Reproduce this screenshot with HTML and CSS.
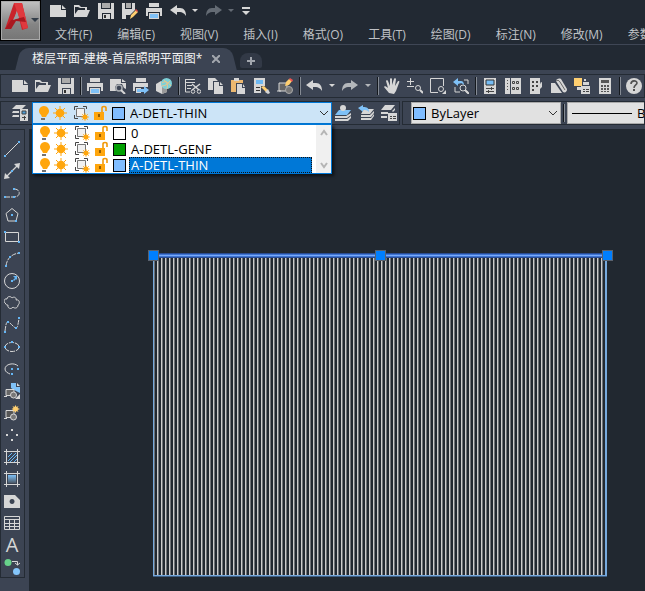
FILE: index.html
```html
<!DOCTYPE html>
<html lang="zh-CN">
<head>
<meta charset="utf-8">
<title>楼层平面-建模-首层照明平面图</title>
<link rel="stylesheet" href="styles.css">
</head>
<body>
<svg class="sprite" aria-hidden="true">
  <symbol id="new" viewBox="0 0 16 16"><path d="M0 2h11v5h5v7H0zM12 2l4 4h-4z"/></symbol>
  <symbol id="open" viewBox="0 0 16 16"><path d="M0 14V2h5l2 2h6v3h-2V5H6L4 4H1v7l3-4h12l-3 7z"/></symbol>
  <symbol id="save" viewBox="0 0 16 16"><path d="M0 0h3v6h10V0h3v16h-3v-6H4v6H0z"/><path d="M4 0h8v5H4z" fill="#aaa"/><path d="M5 11h7v5H5z"/><path d="M6 12h2v3H6z" fill="#333"/></symbol>
  <symbol id="saveas" viewBox="0 0 16 16"><path d="M0 0h3v6h7V0h3v7l-5 5H4v4H0z"/><path d="M4 0h5v5H4z" fill="#aaa"/><path d="M8 16l1-4 5-5 2 2-5 5z" fill="#ffcf70"/><path d="M13 7l1-1 2 2-1 1z" fill="#e34b4b"/></symbol>
  <symbol id="print" viewBox="0 0 16 16"><path d="M3 0h10v4H3zM0 5h16v8h-2V9H2v4H0z"/><path d="M3 10h10v6H3z"/><path d="M4 11h8v4H4z" fill="#7fc1f7"/></symbol>
  <symbol id="undo" viewBox="0 0 16 16"><path d="M0 7l7-5v3h3c4 0 6 3 6 8-2-3-4-4-6-4H7v3z"/></symbol>
  <symbol id="redo" viewBox="0 0 16 16"><path d="M16 7L9 2v3H6C2 5 0 8 0 13c2-3 4-4 6-4h3v3z"/></symbol>
  <symbol id="drop" viewBox="0 0 6 16"><path d="M0 6h6L3 9z"/></symbol>
  <symbol id="custom" viewBox="0 0 8 16"><path d="M0 4h8v2H0zM0 8h8l-4 4z"/></symbol>
  <symbol id="preview" viewBox="0 0 16 16"><path d="M0 1h11v4h5v6l-2-1-2-4H7L5 9l1 4H0zM12 1l4 3h-4z"/><circle cx="9" cy="10" r="3" fill="#3c4453" stroke="#a9adb2" stroke-width="1.500"/><path d="M11 12l4 4" stroke="currentColor" stroke-width="2"/></symbol>
  <symbol id="publish" viewBox="0 0 16 16"><path d="M3 0h10v4H3zM0 5h15v4H2v4H0zM3 10h5v5H3z"/><path d="M4 11h7V8l5 4-5 4v-2H4z" fill="#7fc1f7"/></symbol>
  <symbol id="globe" viewBox="0 0 16 16"><path d="M0 6l5-3 6 4v7l-5 2-6-3z"/><path d="M6 9v7l5-2V7z" fill="#999"/><circle cx="10.500" cy="5.500" r="5.500" fill="#7cd1d8"/><path d="M6 5c4-3 7 0 9 3M8 2c3 2 4 5 3 9M6 8c3 0 6-2 8-5" fill="none" stroke="#eec58c"/></symbol>
  <symbol id="cut" viewBox="0 0 16 16"><path d="M0 1h10v1H0zM0 4h10v1H0zM2 7h5v1H2zM2 10h4v1H2z"/><path d="M0.500 1v13H5" fill="none" stroke="currentColor"/><path d="M7 6l7 6M15 6l-8 6" stroke="currentColor" stroke-width="1.500"/><circle cx="8" cy="13.500" r="1.800" fill="none" stroke="currentColor"/><circle cx="14" cy="13.500" r="1.800" fill="none" stroke="currentColor"/></symbol>
  <symbol id="copy" viewBox="0 0 16 16"><path d="M0 0h7l3 3H5v9H0z"/><path d="M6 4h5v4h4v8H6zM12 4l3 3h-3z"/></symbol>
  <symbol id="paste" viewBox="0 0 16 16"><path d="M0 2h12v3H5v9H0z" fill="#ecb870"/><path d="M3 0h5v3H3zM6 6h5v4h3v6H6zM12 6l2 3h-2z"/></symbol>
  <symbol id="match" viewBox="0 0 16 16"><path d="M0 0h11v8H7v7H0z"/><path d="M2 2h7v4H2z" fill="#6db8f2"/><path d="M2 9h4v1H2zM2 12h4v1H2z" fill="#333"/><path d="M7 9l3-1 4 4-2 2z" fill="#ffcf70"/><path d="M11 14l3-3 2 4-2 1z"/></symbol>
  <symbol id="blockedit" viewBox="0 0 16 16"><path d="M2 5h8v8H2zM0 13h4" fill="#666" stroke="currentColor"/><circle cx="12" cy="12" r="3.500" fill="#777" stroke="#aaa"/><path d="M8 8l1-4 3-3 3 2-3 4z" fill="#ffcf70"/><path d="M12 1l1-1 3 2-1 2z" fill="#ef5350"/></symbol>
  <symbol id="hand" viewBox="0 0 16 16"><path d="M5 15L0 9c0-1 2-1 4 1L2 3c0-1 2-1 2 0l2 5V1c0-1 2-1 2 0v6l2-6c0-1 2-1 2 0l-1 7 3-5c1 0 2 0 1 2l-3 8-2 3z"/></symbol>
  <symbol id="zoompm" viewBox="0 0 16 16"><path d="M3 0h1v3h3v1H4v3H3V4H0V3h3zM0 8h7v1H0z"/><circle cx="11" cy="10" r="2.500" fill="none" stroke="currentColor"/><path d="M13 12l3 3" stroke="currentColor" stroke-width="2"/></symbol>
  <symbol id="zoomwin" viewBox="0 0 16 16"><path d="M8 14.500H0.500v-14h13V8" fill="none" stroke="currentColor"/><circle cx="11" cy="11" r="2.500" fill="none" stroke="currentColor"/><path d="M16 12v4h-4z"/></symbol>
  <symbol id="zoomprev" viewBox="0 0 16 16"><path d="M0 4l5-4v3h3c2 0 3 2 3 4-2-2-3-2-6-1v2z" fill="#7fc1f7"/><path d="M2 9v5h5M11 2h4v4M13 14h2" fill="none" stroke="currentColor"/><circle cx="10" cy="10" r="3" fill="none" stroke="currentColor"/><path d="M12 12l4 4" stroke="currentColor" stroke-width="2"/></symbol>
  <symbol id="props" viewBox="0 0 16 16"><path d="M2 0h12v16H2z"/><path d="M4 2h8v5H4z" fill="#76bdf5" stroke="#333"/><path d="M4 10.500h8M4 13.500h8M9.500 9v3M6.500 12v3" stroke="#444"/></symbol>
  <symbol id="center" viewBox="0 0 16 16"><path d="M0 0h5v16H0zM6 0h10v16H6z"/><path d="M2.500 2v12" stroke="#555" stroke-dasharray="1 2"/><path d="M7.500 3.500h2v2h-2zM11.500 3.500h2v2h-2zM7.500 9.500h2v2h-2zM11.500 9.500h2v2h-2z" fill="none" stroke="#444"/></symbol>
  <symbol id="palette" viewBox="0 0 16 16"><path d="M2 0h10v6l2-1v4l-2 2v5H2zM12 5l2-1v3z"/><path d="M4 3h2v2H4zM8 3h2v2H8zM4 7h2v2H4zM8 7h2v2H8zM4 11h2v2H4z" fill="#444"/></symbol>
  <symbol id="sheet" viewBox="0 0 16 16"><path d="M0 5h4l7 10H0z"/><path d="M5 3c0-2 3-3 5-2l6 10c0 3-2 4-4 3z"/><path d="M5 3c1-1 3-1 4 1l5 8" fill="none" stroke="#666"/></symbol>
  <symbol id="markup" viewBox="0 0 16 16"><path d="M0 0h8v8H0z" fill="#ffcf70"/><path d="M9 4h6v3H9zM3 9h4v3H3z"/><path d="M7 8h9v8H7zM10 1h2v2h-2z"/><path d="M9 11.500h2M12 11.500h3M9 13.500h2M12 13.500h3" stroke="#444"/></symbol>
  <symbol id="calc" viewBox="0 0 16 16"><path d="M2 0h12v16H2z"/><path d="M4 2h8v3H4zM4 7h2v2H4zM7 7h2v2H7zM10 7h2v2h-2zM4 10h2v2H4zM7 10h2v2H7zM10 10h2v2h-2zM4 13h2v1H4zM7 13h2v1H7zM10 13h2v1h-2z" fill="#555"/></symbol>
  <symbol id="help" viewBox="0 0 16 16"><circle cx="8" cy="8" r="8"/><path d="M5 6c0-4 6-4 6-1 0 2-3 2-3 5" fill="none" stroke="#505050" stroke-width="1.600"/><path d="M7 11h2v2H7z" fill="#505050"/></symbol>
  <symbol id="layerprops" viewBox="0 0 16 16"><path d="M4 0h10l-4 4H0zM1 6h6v2H0zM1 10h6v2H0z"/><path d="M8 4h8v12H8z"/><path d="M10 6h4v3h-4z" fill="#4f9fd8" stroke="#444"/><path d="M10 12.500h4M12.500 11v4" stroke="#444"/></symbol>
  <symbol id="layercur" viewBox="0 0 16 16"><path d="M4 5h12l-4 5H0z" fill="#7fc1f7"/><circle cx="8" cy="3" r="3"/><path d="M0 11h11l5-3v2l-4 3H0zM0 14h12l4-3v2l-3 3H0z"/></symbol>
  <symbol id="layerprev" viewBox="0 0 16 16"><path d="M6 4h10l-4 5H3zM3 10h9l4-4v2l-3 4H3zM3 13h10l3-4v2l-3 4H3z"/><path d="M0 3l5-3v2c4 0 6 1 6 5-2-2-3-2-6-2v2z" fill="#7fc1f7"/></symbol>
  <symbol id="layerstate" viewBox="0 0 16 16"><path d="M4 0h10l-4 5H0zM0 7h7v2H0zM11 6l3-3v2l-2 2zM0 11h6v2H0zM7 8h9v8H7z"/><path d="M9 11.500h2M12 11.500h3M9 13.500h2M12 13.500h3" stroke="#444"/></symbol>
  <symbol id="bulb" viewBox="0 0 16 16"><path d="M3 6a5 5 0 1 1 8 4l-1 2H6l-1-2a5 5 0 0 1-2-4z" fill="#ffa60d"/><path d="M5 13h4v2H5z" fill="#737373"/></symbol>
  <symbol id="sun" viewBox="0 0 16 16"><circle cx="8" cy="8" r="4.300" fill="#ffa60d"/><path d="M8 1v14M1 8h14M3 3l10 10M13 3L3 13" stroke="#ffa60d"/></symbol>
  <symbol id="vp" viewBox="0 0 16 16"><path d="M1.500 5V1.500H5M10 1.500h3.500V4M1.500 10v3.500H5" fill="none" stroke="#444"/><path d="M3.500 3.500h8v8h-8z" fill="#f1f1f1" stroke="#777"/><circle cx="12" cy="12" r="2.500" fill="#ffa60d"/><path d="M12 8v8M8 12h8M9 9l6 6M15 9l-6 6" stroke="#ffa60d" stroke-width=".7"/></symbol>
  <symbol id="lock" viewBox="0 0 16 16"><path d="M1 7h10v8H1z" fill="#ffa60d"/><path d="M9 7V3c0-2 4-2 4 0v3" fill="none" stroke="#f0990a" stroke-width="1.600"/><path d="M5 9h2v3H5z" fill="#965d00"/></symbol>
  <symbol id="line" viewBox="0 0 16 16"><path d="M1 15L15 1" stroke="currentColor"/><path class="pt" d="M0 14h2v2H0zM14 0h2v2h-2z"/></symbol>
  <symbol id="xline" viewBox="0 0 16 16"><path d="M2 14L14 2" stroke="currentColor" stroke-width="1.300"/><path d="M0 16l1-6 5 5zM16 0l-1 6-5-5z"/><path class="pt" d="M7 7h2v2H7z"/></symbol>
  <symbol id="pline" viewBox="0 0 16 16"><path d="M1 12h9c7 0 7-8 0-8" fill="none" stroke="currentColor" stroke-dasharray="5 1"/><path class="pt" d="M0 11h2v2H0zM9 11h2v2H9zM9 3h2v2H9z"/></symbol>
  <symbol id="polygon" viewBox="0 0 16 16"><path d="M8 1.500l6 5L12 14H4L2 6.500z" fill="none" stroke="currentColor"/><path class="pt" d="M7 7h2v2H7zM11 13h2v2h-2z"/></symbol>
  <symbol id="rect" viewBox="0 0 16 16"><path d="M1.500 3.500h13v9h-13z" fill="none" stroke="currentColor"/><path class="pt" d="M0 2h2v2H0zM14 12h2v2h-2z"/></symbol>
  <symbol id="arc" viewBox="0 0 16 16"><path d="M2 15C3 7 8 3 15 2" fill="none" stroke="currentColor" stroke-dasharray="5 1"/><path class="pt" d="M1 14h2v2H1zM5 5h2v2H5zM14 1h2v2h-2z"/></symbol>
  <symbol id="circle" viewBox="0 0 16 16"><circle cx="8" cy="8" r="7.500" fill="none" stroke="currentColor"/><path class="pt" d="M7 7h2v2H7zM9 3h4v4l-1-1-2 2-1-1 2-2z"/></symbol>
  <symbol id="cloud" viewBox="0 0 16 16"><path d="M2 9C-1 7 0 3 3 4c0-3 4-3 5-1 2-2 5 0 4 2 4-1 4 4 2 5 0 3-3 4-5 2-2 3-6 1-5-2-1 0-2 0-2-1z" fill="none" stroke="currentColor"/></symbol>
  <symbol id="spline" viewBox="0 0 16 16"><path d="M1 14C2 8 2 5 4 5s6 6 8 6 2-5 3-9" fill="none" stroke="currentColor" stroke-dasharray="5 1"/><path class="pt" d="M0 14h2v2H0zM3 4h2v2H3zM11 10h2v2h-2zM14 0h2v2h-2z"/></symbol>
  <symbol id="ellipse" viewBox="0 0 16 16"><ellipse cx="8" cy="8" rx="7" ry="4.500" fill="none" stroke="currentColor" stroke-dasharray="5 1"/><path class="pt" d="M0 7h2v2H0zM14 7h2v2h-2zM7 2h2v2H7z"/></symbol>
  <symbol id="earc" viewBox="0 0 16 16"><path d="M14 5C10 1 1 3 1 8c0 3 3 4 5 5" fill="none" stroke="currentColor"/><path class="pt" d="M7 7h2v2H7zM13 7h2v2h-2zM7 12h2v2H7z"/></symbol>
  <symbol id="insert" viewBox="0 0 16 16"><path d="M7 0h5v4h4v6l-4-2-5-3z" fill="#7fc1f7"/><path d="M13 0l3 3h-3zM16 11v5h-5z"/><path d="M2 6.500h8v6H2zM0 13.500h3" fill="#666" stroke="currentColor"/><circle cx="9.500" cy="12" r="3" fill="#777" stroke="currentColor"/></symbol>
  <symbol id="make" viewBox="0 0 16 16"><path d="M2 5.500h8v7H2zM0 13.500h3" fill="#555" stroke="currentColor"/><circle cx="9.500" cy="12" r="3" fill="#777" stroke="currentColor"/><path d="M11.500 0l1 2 2-1-1 2 2.500 1-2.500 1 1 2-2-1-1 2-1-2-2 1 1-2-2-1 2-1-1-2 2 1z" fill="#ffcf70"/></symbol>
  <symbol id="point" viewBox="0 0 16 16"><path d="M7 2h2v2H7zM2 7h2v2H2zM12 7h2v2h-2zM7 12h2v2H7z"/></symbol>
  <symbol id="hatch" viewBox="0 0 16 16"><path d="M4 8l4-4M4 12l8-8M6 13l7-7M10 13l3-3" stroke="#65b6f5"/><path d="M2.500 0v16M13.500 0v16M0 2.500h16M0 13.500h16" stroke="currentColor"/></symbol>
  <symbol id="gradient" viewBox="0 0 16 16"><linearGradient id="blueFade" x2="0" y2="1"><stop stop-color="#7fc1f7"/><stop offset="1" stop-color="#4b5968"/></linearGradient><path d="M4 4h8v8H4z" fill="url(#blueFade)"/><path d="M2.500 0v16M13.500 0v16M0 2.500h16M0 13.500h16" stroke="currentColor"/></symbol>
  <symbol id="region" viewBox="0 0 16 16"><path fill-rule="evenodd" d="M0 2h11l5 5v8H0zM8 6a2.500 2.500 0 1 0 .1 0z"/></symbol>
  <symbol id="table" viewBox="0 0 16 16"><path d="M0.500 1.500h15v13H0.500zM0 4.500h16M0 8.500h16M0 11.500h16M5.500 5v10M10.500 5v10" fill="none" stroke="currentColor"/></symbol>
  <symbol id="addsel" viewBox="0 0 16 16"><circle cx="4" cy="3.500" r="3.500" fill="#67d28a"/><circle cx="12.500" cy="12.500" r="3.500" fill="#84c5fa"/><path d="M8 2.500h5.500V6M11 4l2.500 2L16 4" fill="none" stroke="currentColor"/></symbol>
</svg>

<header class="title">
  <button class="app" aria-label="应用程序菜单"><svg viewBox="0 0 39 39"><path d="M4 28L13 2h8l6 25-6 2-5-20-6 19z" fill="#c9232b"/><path d="M13 2h8l6 25-5 1z" fill="#e0393e"/><path d="M4 28l6-9 13-3 2 5-10-1-5 8z" fill="#a91820"/><path d="M16 11l-4 8 6-2z" fill="#9a9fa3"/><path d="M30 17h8l-4 4z" fill="#333d49"/></svg></button>
  <div class="heading">
    <div class="quick">
      <button aria-label="新建"><svg><use href="#new"/></svg></button><button aria-label="打开"><svg><use href="#open"/></svg></button><button aria-label="保存"><svg><use href="#save"/></svg></button><button aria-label="另存为"><svg><use href="#saveas"/></svg></button><button aria-label="打印"><svg><use href="#print"/></svg></button><button aria-label="放弃"><svg><use href="#undo"/></svg></button><button class="drop" aria-label="放弃列表"><svg><use href="#drop"/></svg></button><button class="dim" aria-label="重做"><svg><use href="#redo"/></svg></button><button class="drop dim" aria-label="重做列表"><svg><use href="#drop"/></svg></button><button class="custom" aria-label="自定义"><svg><use href="#custom"/></svg></button>
    </div>
    <nav class="menu"><a href="#">文件(F)</a><a href="#">编辑(E)</a><a href="#">视图(V)</a><a href="#">插入(I)</a><a href="#">格式(O)</a><a href="#">工具(T)</a><a href="#">绘图(D)</a><a href="#">标注(N)</a><a href="#">修改(M)</a><a href="#">参数(P)</a></nav>
  </div>
</header>

<div class="tabs">
  <div class="tab"><a href="#">楼层平面-建模-首层照明平面图*</a><button aria-label="关闭"><svg viewBox="0 0 8 8"><path d="M0 0l8 8M8 0L0 8" stroke="currentColor" stroke-width="2"/></svg></button></div>
  <button class="plus" aria-label="新图形"><svg viewBox="0 0 8 8"><path d="M4 0v8M0 4h8" stroke="currentColor" stroke-width="2"/></svg></button>
</div>

<div class="bars">
  <div class="panel standard">
    <button aria-label="新建"><svg><use href="#new"/></svg></button><button aria-label="打开"><svg><use href="#open"/></svg></button><button aria-label="保存"><svg><use href="#save"/></svg></button><i class="sep"></i>
    <button aria-label="打印"><svg><use href="#print"/></svg></button><button aria-label="预览"><svg><use href="#preview"/></svg></button><button aria-label="发布"><svg><use href="#publish"/></svg></button><button aria-label="三维打印"><svg><use href="#globe"/></svg></button><i class="sep"></i>
    <button aria-label="剪切"><svg><use href="#cut"/></svg></button><button aria-label="复制"><svg><use href="#copy"/></svg></button><button aria-label="粘贴"><svg><use href="#paste"/></svg></button><button aria-label="特性匹配"><svg><use href="#match"/></svg></button><button aria-label="块编辑器"><svg><use href="#blockedit"/></svg></button><i class="sep"></i>
    <button aria-label="放弃"><svg><use href="#undo"/></svg></button><button class="drop" aria-label="放弃列表"><svg><use href="#drop"/></svg></button><button class="soft" aria-label="重做"><svg><use href="#redo"/></svg></button><button class="drop soft" aria-label="重做列表"><svg><use href="#drop"/></svg></button><i class="sep"></i>
    <button aria-label="平移"><svg><use href="#hand"/></svg></button><button aria-label="实时缩放"><svg><use href="#zoompm"/></svg></button><button aria-label="窗口缩放"><svg><use href="#zoomwin"/></svg></button><button aria-label="上一个"><svg><use href="#zoomprev"/></svg></button><i class="sep"></i>
    <button aria-label="特性"><svg><use href="#props"/></svg></button><button aria-label="设计中心"><svg><use href="#center"/></svg></button><button aria-label="工具选项板"><svg><use href="#palette"/></svg></button><button aria-label="图纸集"><svg><use href="#sheet"/></svg></button><button aria-label="标记集"><svg><use href="#markup"/></svg></button><button aria-label="计算器"><svg><use href="#calc"/></svg></button><i class="sep"></i>
    <button aria-label="帮助"><svg><use href="#help"/></svg></button>
  </div>
  <div class="second">
    <div class="panel layers">
      <button aria-label="图层特性"><svg><use href="#layerprops"/></svg></button>
      <div class="combo">
        <div class="state"><svg><use href="#bulb"/></svg><svg><use href="#sun"/></svg><svg><use href="#vp"/></svg><svg><use href="#lock"/></svg><i class="swatch"></i></div>
        <select aria-label="图层"><option>A-DETL-THIN</option></select>
        <svg class="chev" viewBox="0 0 8 8"><path d="M0 2l4 4 4-4" fill="none" stroke="#333"/></svg>
        <div class="list">
          <ul role="listbox" aria-label="图层列表">
            <li role="option"><span class="state"><svg><use href="#bulb"/></svg><svg><use href="#sun"/></svg><svg><use href="#vp"/></svg><svg><use href="#lock"/></svg><i class="swatch white"></i></span><span class="name">0</span></li>
            <li role="option"><span class="state"><svg><use href="#bulb"/></svg><svg><use href="#sun"/></svg><svg><use href="#vp"/></svg><svg><use href="#lock"/></svg><i class="swatch green"></i></span><span class="name">A-DETL-GENF</span></li>
            <li role="option" aria-selected="true"><span class="state"><svg><use href="#bulb"/></svg><svg><use href="#sun"/></svg><svg><use href="#vp"/></svg><svg><use href="#lock"/></svg><i class="swatch"></i></span><span class="name">A-DETL-THIN</span></li>
          </ul>
          <div class="scroll"><svg viewBox="0 0 8 8"><path d="M1 6l3-4 3 4" fill="none" stroke="#b5b5b5" stroke-width="2"/></svg><svg viewBox="0 0 8 8"><path d="M1 2l3 4 3-4" fill="none" stroke="#b5b5b5" stroke-width="2"/></svg></div>
        </div>
      </div>
      <div class="group"><button aria-label="置为当前"><svg><use href="#layercur"/></svg></button><button aria-label="上一个图层"><svg><use href="#layerprev"/></svg></button><button aria-label="图层状态"><svg><use href="#layerstate"/></svg></button></div>
    </div>
    <div class="panel properties">
      <div class="field color"><i class="swatch"></i><select aria-label="颜色"><option>ByLayer</option></select><svg class="chev" viewBox="0 0 8 8"><path d="M0 2l4 4 4-4" fill="none" stroke="#333"/></svg></div>
      <i class="sep"></i>
      <div class="field ltype"><i class="sample"></i><select aria-label="线型"><option>ByLayer</option></select></div>
    </div>
  </div>
</div>

<div class="work">
  <aside class="side">
    <div class="panel draw">
      <button aria-label="直线"><svg><use href="#line"/></svg></button><button aria-label="构造线"><svg><use href="#xline"/></svg></button><button aria-label="多段线"><svg><use href="#pline"/></svg></button><button aria-label="多边形"><svg><use href="#polygon"/></svg></button><button aria-label="矩形"><svg><use href="#rect"/></svg></button><button aria-label="圆弧"><svg><use href="#arc"/></svg></button><button aria-label="圆"><svg><use href="#circle"/></svg></button><button aria-label="修订云线"><svg><use href="#cloud"/></svg></button><button aria-label="样条曲线"><svg><use href="#spline"/></svg></button><button aria-label="椭圆"><svg><use href="#ellipse"/></svg></button><button aria-label="椭圆弧"><svg><use href="#earc"/></svg></button><button aria-label="插入块"><svg><use href="#insert"/></svg></button><button aria-label="创建块"><svg><use href="#make"/></svg></button><button aria-label="点"><svg><use href="#point"/></svg></button><button aria-label="图案填充"><svg><use href="#hatch"/></svg></button><button aria-label="渐变色"><svg><use href="#gradient"/></svg></button><button aria-label="面域"><svg><use href="#region"/></svg></button><button aria-label="表格"><svg><use href="#table"/></svg></button><button class="text" aria-label="多行文字">A</button><button aria-label="添加选定对象"><svg><use href="#addsel"/></svg></button>
    </div>
  </aside>
  <main class="canvas">
    <svg class="drawing" viewBox="0 0 466 328" shape-rendering="crispEdges">
      <defs><pattern id="stripes" x="2" width="4" height="4" patternUnits="userSpaceOnUse"><path d="M0 0h1v4H0z" fill="#ccc"/><path d="M1 0h1v4H1z" fill="#6f7377"/></pattern></defs>
      <path d="M6 7h453v320H6z" fill="url(#stripes)"/>
      <path d="M6 7h1v320H6z" fill="#76a9dd"/><path d="M458 7h2v320h-2z" fill="#76a9dd"/><path d="M6 326h454v1H6z" fill="#76a9dd"/><path d="M6 327h454v1H6z" fill="#3e5f85"/>
      <path d="M6 4h454v5H6z" fill="#294c92"/><path d="M6 5h454v3H6z" fill="#3f75d4"/><path d="M6 6h454v1H6z" fill="#78aafa"/>
      <g fill="#007fff" stroke="#5a626e"><path d="M1.500 1.500h10v10h-10z"/><path d="M228.500 1.500h10v10h-10z"/><path d="M455.500 1.500h10v10h-10z"/></g>
    </svg>
  </main>
</div>
</body>
</html>
```
FILE: styles.css
```css
* { box-sizing: border-box; }
body {
  margin: 0;
  min-height: 100vh;
  display: flex;
  flex-direction: column;
  overflow: hidden;
  background: #212830;
  color: #dcdcdc;
  font: 12px/16px "Open Sans", "Noto Sans CJK SC", sans-serif;
}
.sprite { position: absolute; width: 0; height: 0; }
svg { display: block; width: 16px; height: 16px; fill: currentColor; }
.pt { fill: #65b6f5; }
a { color: inherit; text-decoration: none; }
button {
  flex: none;
  width: 16px;
  height: 16px;
  padding: 0;
  border: 0;
  background: none;
  color: #d6d6d6;
}
.drop, .drop svg { width: 6px; }
.custom, .custom svg { width: 8px; }
.dim { color: #646b74; }
.soft { color: #b4b7bb; }

.title { display: flex; height: 45px; background: #222933; border-bottom: 1px solid #3f4655; }
.app {
  width: 41px;
  height: 41px;
  border: 1px solid #000;
  background: linear-gradient(#c2c2c2, #858585 60%, #757575);
  box-shadow: inset 0 0 0 1px #a9a9a9;
}
.app svg { width: 39px; height: 39px; }
.heading { flex: 1; min-width: 0; padding: 3px 0 0 9px; overflow: hidden; }
.quick { display: flex; gap: 8px; height: 24px; }
.quick .drop { margin-left: -2px; }
.menu { display: flex; gap: 25px; padding-left: 5px; white-space: nowrap; color: #bfc1c5; }

.tabs { display: flex; height: 25px; padding: 3px 0 0 18px; background: #222933; }
.tab {
  position: relative;
  display: flex;
  align-items: center;
  gap: 10px;
  padding: 0 14px;
  color: #f2f2f2;
  white-space: nowrap;
}
.tab::before, .tab::after {
  content: "";
  position: absolute;
  top: 0;
  bottom: 0;
  background: #3c4453;
}
.tab::before { left: 0; right: 20px; border-radius: 8px 0 0 0; transform: skewX(-14deg); }
.tab::after { left: 20px; right: 0; border-radius: 0 8px 0 0; transform: skewX(14deg); }
.tab > * { position: relative; z-index: 1; }
.tab button, .tab button svg { width: 8px; height: 8px; color: #a2a6ad; }
.plus {
  display: grid;
  place-items: center;
  width: 22px;
  height: 15px;
  margin: 5px 0 0 6px;
  border-radius: 8px 8px 2px 2px;
  background: #323946;
  color: #a2a6ad;
}
.plus svg { width: 8px; height: 8px; }

.bars { padding-top: 4px; background: #3c4453; }
.panel { border: 1px solid #242b34; background: #3c4453; }
.standard {
  display: flex;
  align-items: center;
  gap: 7px;
  height: 24px;
  padding-left: 11px;
}
.sep {
  flex: none;
  width: 2px;
  height: 18px;
  margin: 0 -2px 0 -1px;
  border-left: 1px solid #15191e;
  border-right: 1px solid #858b94;
}
.second { display: flex; gap: 2px; padding: 3px 0 4px; }
.layers { display: flex; align-items: center; height: 24px; padding: 0 2px 0 11px; }
.combo {
  position: relative;
  display: flex;
  align-items: center;
  width: 300px;
  height: 22px;
  margin-left: 4px;
  border: 1px solid #0078d7;
  background: #cce4f7;
}
select {
  appearance: none;
  flex: 1;
  min-width: 0;
  padding: 0;
  border: 0;
  background: none;
  color: #000;
  font: inherit;
  font-size: 13px;
}
.state { display: flex; flex: none; align-items: center; width: 97px; padding-left: 3px; }
.state svg:nth-child(3) { margin-left: 5px; }
.state svg:nth-child(4) { margin-left: 4px; }
.state .swatch { margin-left: 3px; }
.swatch { flex: none; width: 13px; height: 13px; border: 1px solid #000; background: #80bdff; }
.swatch.white { background: #fff; }
.swatch.green { background: #00a000; }
.chev { width: 8px; height: 8px; margin-right: 3px; pointer-events: none; }
.list {
  position: absolute;
  z-index: 2;
  top: 21px;
  left: -1px;
  right: -1px;
  display: flex;
  border: 1px solid #0078d7;
  background: #fff;
  color: #000;
  box-shadow: 2px 2px 3px #0009;
  font-size: 13px;
}
.list ul { flex: 1; margin: 0; padding: 0 4px 0 0; list-style: none; }
.list li { display: flex; height: 16px; }
.list .state { width: 96px; padding-left: 4px; }
.name { flex: 1; padding-left: 2px; line-height: 16px; }
[aria-selected="true"] .name { background: #0078d7; color: #fff; outline: 1px dotted #111; outline-offset: -1px; }
.scroll { display: flex; flex-direction: column; justify-content: space-between; align-items: center; width: 15px; padding: 4px 0; background: #f0f0f0; }
.scroll svg { width: 8px; height: 8px; }
.group { display: flex; gap: 7px; margin-left: 3px; }
.properties { display: flex; flex: 1; align-items: center; min-width: 0; height: 24px; padding-left: 8px; }
.properties .sep { margin: 0 2px; }
.field { display: flex; align-items: center; gap: 5px; height: 22px; border: 1px solid #aaa; background: #e1e1e1; }
.color { width: 150px; padding-left: 1px; }
.ltype { flex: 1; min-width: 0; padding-left: 4px; overflow: hidden; border-right: 0; }
.sample { flex: none; width: 60px; height: 1px; background: #000; }

.work { display: flex; flex: 1; }
.side { width: 29px; background: #3c4453; }
.draw { display: flex; flex-direction: column; gap: 6px; width: 25px; padding: 11px 0 2px 3px; }
.draw .text { font: 20px/16px "Open Sans", sans-serif; }
.canvas { flex: 1; min-width: 0; padding: 120px 0 0 118px; overflow: hidden; }
.drawing { width: 466px; height: 328px; }
```
